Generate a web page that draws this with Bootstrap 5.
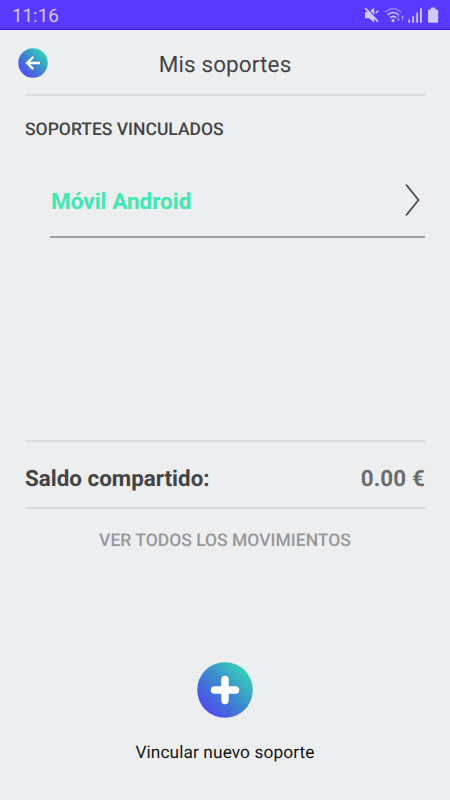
<!DOCTYPE html>
<html lang="es">
<head>
<meta charset="utf-8">
<meta name="viewport" content="width=device-width, initial-scale=1">
<title>Mis soportes</title>
<link href="https://cdn.jsdelivr.net/npm/bootstrap@5.3.0/dist/css/bootstrap.min.css" rel="stylesheet">
<style>
  body { font-family: Roboto, sans-serif; background: #edeef0; color: #434446; line-height: 1; text-rendering: geometricPrecision; }
  .screen { height: 800px; width: 450px; overflow: hidden; }
  .statusbar { height: 30px; background: #5938ff; border-bottom: 1px solid #3c14dc; color: #d2c8fb; padding: 1px 11px 0 12px; }
  .clock { font-size: 18.8px; padding-top: 2px; }
  .topbar { height: 66px; margin: 0 25px; padding-top: 2px; border-bottom: 2px solid #dbdcde; }
  .back { width: 30px; height: 30px; margin-left: -7px; }
  .title { font-size: 22.5px; letter-spacing: .12px; padding-top: 5px; margin-right: 23px; }
  .section-title { height: 66px; margin: 0 25px; padding-top: 2px; font-size: 17.5px; font-weight: 500; }
  .device { height: 76px; margin: 0 25px 0 50px; padding: 2px 4px 0 1px; border-bottom: 2px solid #a0a1a3; color: #40e8b2; font-size: 22.5px; font-weight: 700; }
  .device-name { padding-top: 4px; }
  .devices { height: 278px; }
  .balance { height: 69px; margin: 0 25px; padding-top: 9px; border: solid #dbdcde; border-width: 2px 0; font-size: 22.4px; font-weight: 700; }
  .amount { color: #6b6c6e; letter-spacing: .15px; }
  .movements { height: 62px; padding-top: 3px; font-size: 17.5px; font-weight: 500; color: #97989a; }
  .add { margin-top: 91px; color: #161616; font-size: 17.3px; letter-spacing: .1px; }
  .add-label { margin-top: 27px; }
</style>
<script src="https://cdn.jsdelivr.net/npm/bootstrap@5.3.0/dist/js/bootstrap.bundle.min.js"></script>
</head>
<body>
<div class="screen d-flex flex-column">
  <header class="statusbar d-flex align-items-center justify-content-between flex-shrink-0">
    <span class="clock">11:16</span>
    <svg width="76" height="20" viewBox="363 5 76 20" fill="#d2c8fb">
      <path d="M365 12h4l5.2-4.6v15.2l-5.2-4.4h-4z"/>
      <path d="M366.2 7.2l14 15" stroke="#5938ff" stroke-width="1.4" fill="none"/>
      <path d="M365.2 8.2l12.8 13.4" stroke="#d2c8fb" stroke-width="1.8" fill="none"/>
      <path d="M375.6 13.2l2.6-2.6" stroke="#d2c8fb" stroke-width="1.6"/>
      <g fill="none" stroke="#d2c8fb" stroke-width="1.6">
        <path d="M385.2 12.2q8-7.2 16 0" opacity=".45"/>
        <path d="M387.6 15q5.6-5 11.2 0"/>
        <path d="M390.2 17.7q3-2.6 6 0"/>
      </g>
      <circle cx="393" cy="20.4" r="1.5"/>
      <path d="M398.3 15.5v5m-1.6-1.8l1.6 2 1.6-2M402.5 21v-5m-1.6 1.8l1.6-2 1.6 2" fill="none" stroke="#d2c8fb" opacity=".5"/>
      <path d="M408.3 19.5h1.8v3.2h-1.8zM412.3 16.3h1.8v6.4h-1.8zM416.3 12.5h1.8v10.2h-1.8zM420 8.3h1.8v14.4H420z"/>
      <path d="M430.8 7.5h4.4v2h1.8q1.2 0 1.2 1.2v11q0 1-1.2 1h-7.8q-1.2 0-1.2-1v-11q0-1.2 1.2-1.2h1.6z"/>
    </svg>
  </header>

  <nav class="topbar d-flex align-items-center flex-shrink-0">
    <svg class="back flex-shrink-0" viewBox="0 0 30 30">
      <defs>
        <linearGradient id="brand" x1=".1" y1=".9" x2=".9" y2=".1">
          <stop offset="0" stop-color="#5045ef"/>
          <stop offset=".5" stop-color="#3c87cf"/>
          <stop offset="1" stop-color="#32d8b4"/>
        </linearGradient>
      </defs>
      <circle cx="15" cy="15" r="14.7" fill="url(#brand)"/>
      <path d="M22 15H9M15.3 8.8L9.1 15l6.2 6.2" fill="none" stroke="#fff" stroke-width="2.4"/>
    </svg>
    <h1 class="title flex-grow-1 text-center fw-normal mb-0 lh-1">Mis soportes</h1>
  </nav>

  <h2 class="section-title d-flex align-items-center flex-shrink-0 mb-0">SOPORTES VINCULADOS</h2>

  <main class="devices flex-shrink-0">
    <a class="device d-flex align-items-center justify-content-between text-decoration-none" href="#">
      <span class="device-name">Móvil Android</span>
      <svg width="18" height="34" viewBox="0 0 18 34" fill="none" stroke="#4a4b4d" stroke-width="1.8"><path d="M3 1.5L15.5 17 3 32.5"/></svg>
    </a>
  </main>

  <section class="balance d-flex align-items-center justify-content-between flex-shrink-0">
    <span>Saldo compartido:</span>
    <span class="amount">0.00 €</span>
  </section>
  <a class="movements d-flex align-items-center justify-content-center flex-shrink-0 text-decoration-none" href="#">VER TODOS LOS MOVIMIENTOS</a>

  <a class="add d-flex flex-column align-items-center text-decoration-none" href="#">
    <svg width="56" height="56" viewBox="0 0 56 56">
      <circle cx="28" cy="28" r="27.8" fill="url(#brand)"/>
      <path d="M28 17.5v21M17.5 28h21" stroke="#fff" stroke-width="7.4" stroke-linecap="round"/>
    </svg>
    <span class="add-label">Vincular nuevo soporte</span>
  </a>
</div>
</body>
</html>
